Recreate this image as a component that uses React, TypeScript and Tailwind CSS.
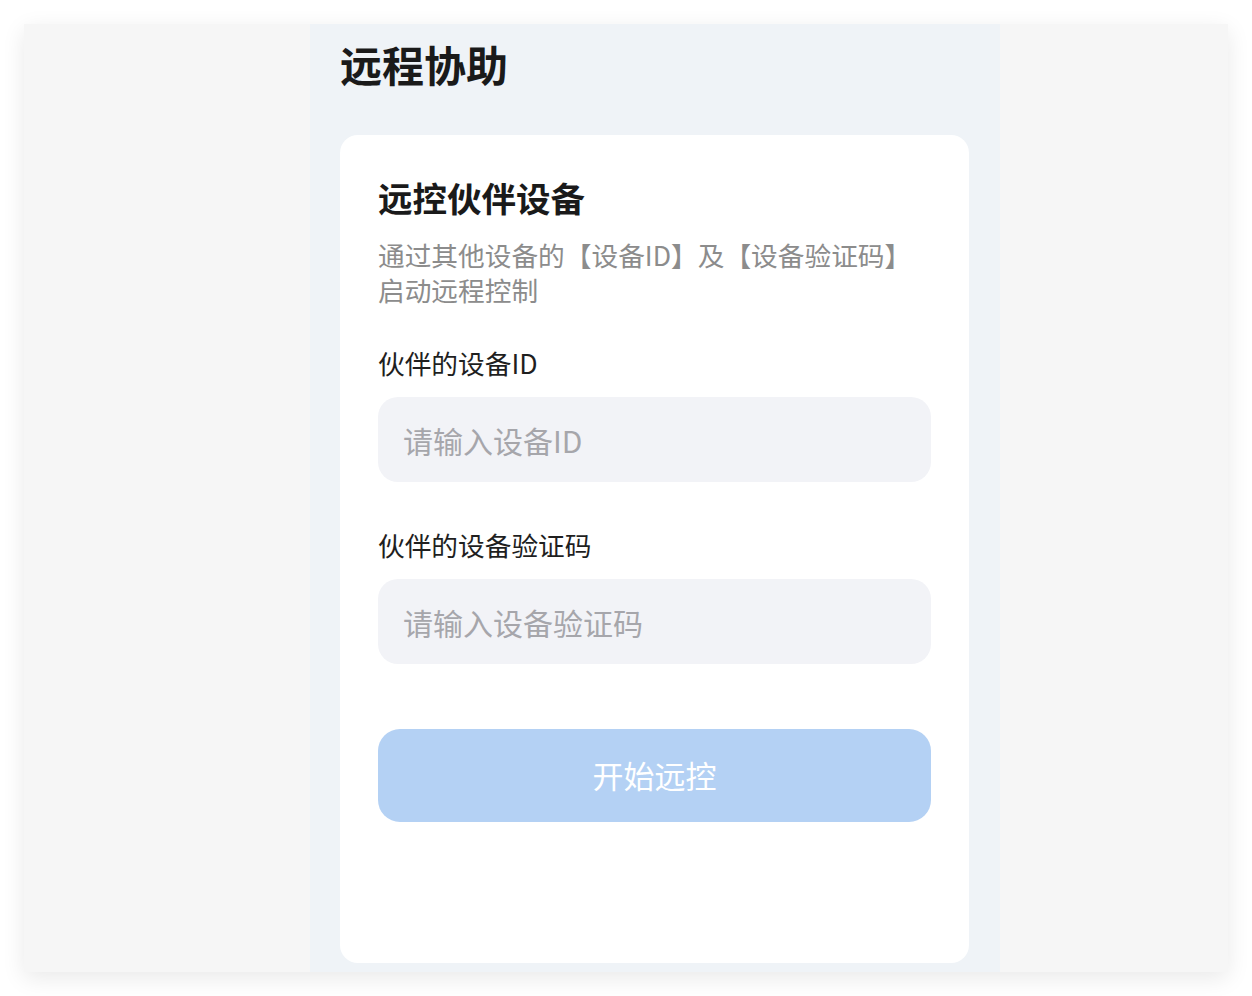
// @ts-nocheck
import { useState } from 'react';

const FONT = "font-['Noto_Sans_CJK_SC','Noto_Sans',sans-serif]";

function Field({ label, placeholder, value, onChange, top }) {
  return (
    <div className={top}>
      <div className="text-[26.7px] leading-[35px] text-[#1f1f1f]">{label}</div>
      <input
        value={value}
        onChange={(e) => onChange(e.target.value)}
        placeholder={placeholder}
        className="mt-[17px] block w-full h-[85px] rounded-[20px] bg-[#f2f3f7] px-[25px] text-[30px] text-[#1f1f1f] placeholder:text-[#a6a6ab] outline-none"
      />
    </div>
  );
}

export default function App() {
  const [deviceId, setDeviceId] = useState('');
  const [code, setCode] = useState('');
  const ready = deviceId && code;

  return (
    <div className={`min-h-screen bg-white p-[24px] ${FONT}`}>
      <div className="h-[948px] bg-[#f6f6f6] shadow-[0_6px_22px_rgba(0,0,0,0.09)] flex pl-[286px]">
        <div className="w-[690px] bg-[#eff3f7] flex flex-col pl-[30px] pr-[31px] pb-[9px]">
          <h1 className="pt-[16px] text-[42px] leading-[48px] font-bold text-[#1a1a1a]">远程协助</h1>

          <div className="mt-[47px] flex-1 bg-white rounded-[18px] px-[38px] pt-[42px]">
            <h2 className="text-[34.5px] leading-[40px] font-bold text-[#1a1a1a]">远控伙伴设备</h2>
            <p className="mt-[20px] text-[26.7px] leading-[35px] text-[#8c8c8c]">
              通过其他设备的【设备ID】及【设备验证码】启动远程控制
            </p>

            <Field
              top="mt-[38px]"
              label="伙伴的设备ID"
              placeholder="请输入设备ID"
              value={deviceId}
              onChange={setDeviceId}
            />
            <Field
              top="mt-[45px]"
              label="伙伴的设备验证码"
              placeholder="请输入设备验证码"
              value={code}
              onChange={setCode}
            />

            <button
              className={`mt-[65px] w-full h-[93px] rounded-[22px] text-[31px] text-white ${ready ? 'bg-[#3c8ae8]' : 'bg-[#b4d1f4]'}`}
            >
              开始远控
            </button>
          </div>
        </div>
      </div>
    </div>
  );
}
